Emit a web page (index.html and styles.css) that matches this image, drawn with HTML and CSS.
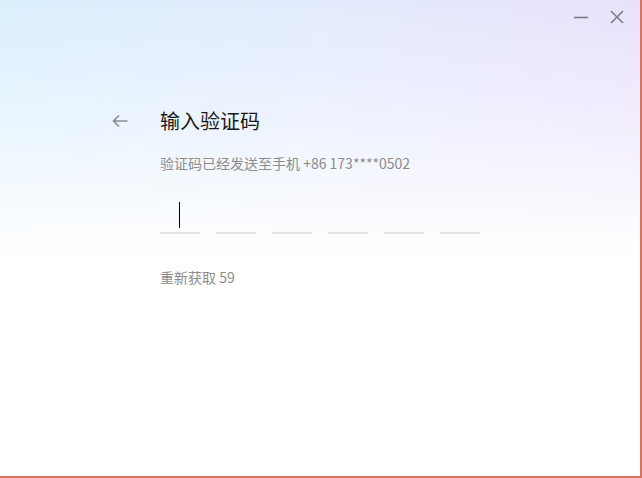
FILE: index.html
```html
<!DOCTYPE html>
<html lang="zh">
<head>
<meta charset="utf-8">
<link rel="stylesheet" href="styles.css">
</head>
<body>
<div class="window">
  <div class="titlebar">
    <button class="winbtn" aria-label="最小化">
      <svg width="16" height="16" viewBox="0 0 16 16"><path d="M1 8.5H15" stroke="#7d7d85" stroke-width="1.6"/></svg>
    </button>
    <button class="winbtn" aria-label="关闭">
      <svg width="16" height="16" viewBox="0 0 16 16"><path d="M2 2L14 14M14 2L2 14" stroke="#7d7d85" stroke-width="1.6"/></svg>
    </button>
  </div>
  <div class="content">
    <div class="back">
      <svg width="18" height="14" viewBox="0 0 18 14"><path d="M16.5 7H2.5M8 1.5L2.5 7L8 12.5" stroke="#8a8a90" stroke-width="1.6" fill="none"/></svg>
    </div>
    <div class="form">
      <h1 class="title">输入验证码</h1>
      <p class="subtitle">验证码已经发送至手机 +86 173****0502</p>
      <div class="code">
        <div class="cell active"><span class="caret"></span></div>
        <div class="cell"></div>
        <div class="cell"></div>
        <div class="cell"></div>
        <div class="cell"></div>
        <div class="cell"></div>
      </div>
      <p class="resend">重新获取 59</p>
    </div>
  </div>
</div>
</body>
</html>
```
FILE: styles.css
```css
html, body {
  margin: 0;
  padding: 0;
}
body {
  width: 642px;
  height: 478px;
  font-family: "Noto Sans CJK SC", "Noto Sans", sans-serif;
}
.window {
  width: 642px;
  height: 478px;
  box-sizing: border-box;
  border-right: 2px solid #d9735f;
  border-bottom: 2px solid #d9735f;
  background:
    linear-gradient(180deg, rgba(255,255,255,0) 0px, rgba(255,255,255,0.4) 120px, #ffffff 260px),
    linear-gradient(90deg, #dbeffd 0%, #e3ebfd 50%, #e8e2fc 100%);
  display: flex;
  flex-direction: column;
}
.titlebar {
  display: flex;
  justify-content: flex-end;
  gap: 20px;
  padding: 9px 15px 0 0;
  height: 25px;
}
.winbtn {
  border: 0;
  background: none;
  padding: 0;
  width: 16px;
  height: 16px;
  display: flex;
}
.content {
  display: flex;
  padding: 74px 0 0 111px;
}
.back {
  width: 49px;
  padding-top: 6px;
}
.back svg {
  display: block;
}
.form {
  display: flex;
  flex-direction: column;
}
.title {
  margin: 0;
  font-size: 20px;
  font-weight: 400;
  line-height: 26px;
  color: #1a1a1a;
}
.subtitle {
  margin: 19px 0 0;
  font-size: 14px;
  line-height: 20px;
  color: #8c8c8c;
}
.code {
  display: flex;
  gap: 16px;
  margin-top: 27px;
}
.cell {
  width: 40px;
  height: 32px;
  border-bottom: 2px solid #e3e3e3;
  position: relative;
}
.caret {
  position: absolute;
  left: 19px;
  top: 2px;
  width: 1px;
  height: 26px;
  background: #000;
}
.resend {
  margin: 33px 0 0;
  font-size: 14px;
  line-height: 20px;
  color: #8c8c8c;
}
```
